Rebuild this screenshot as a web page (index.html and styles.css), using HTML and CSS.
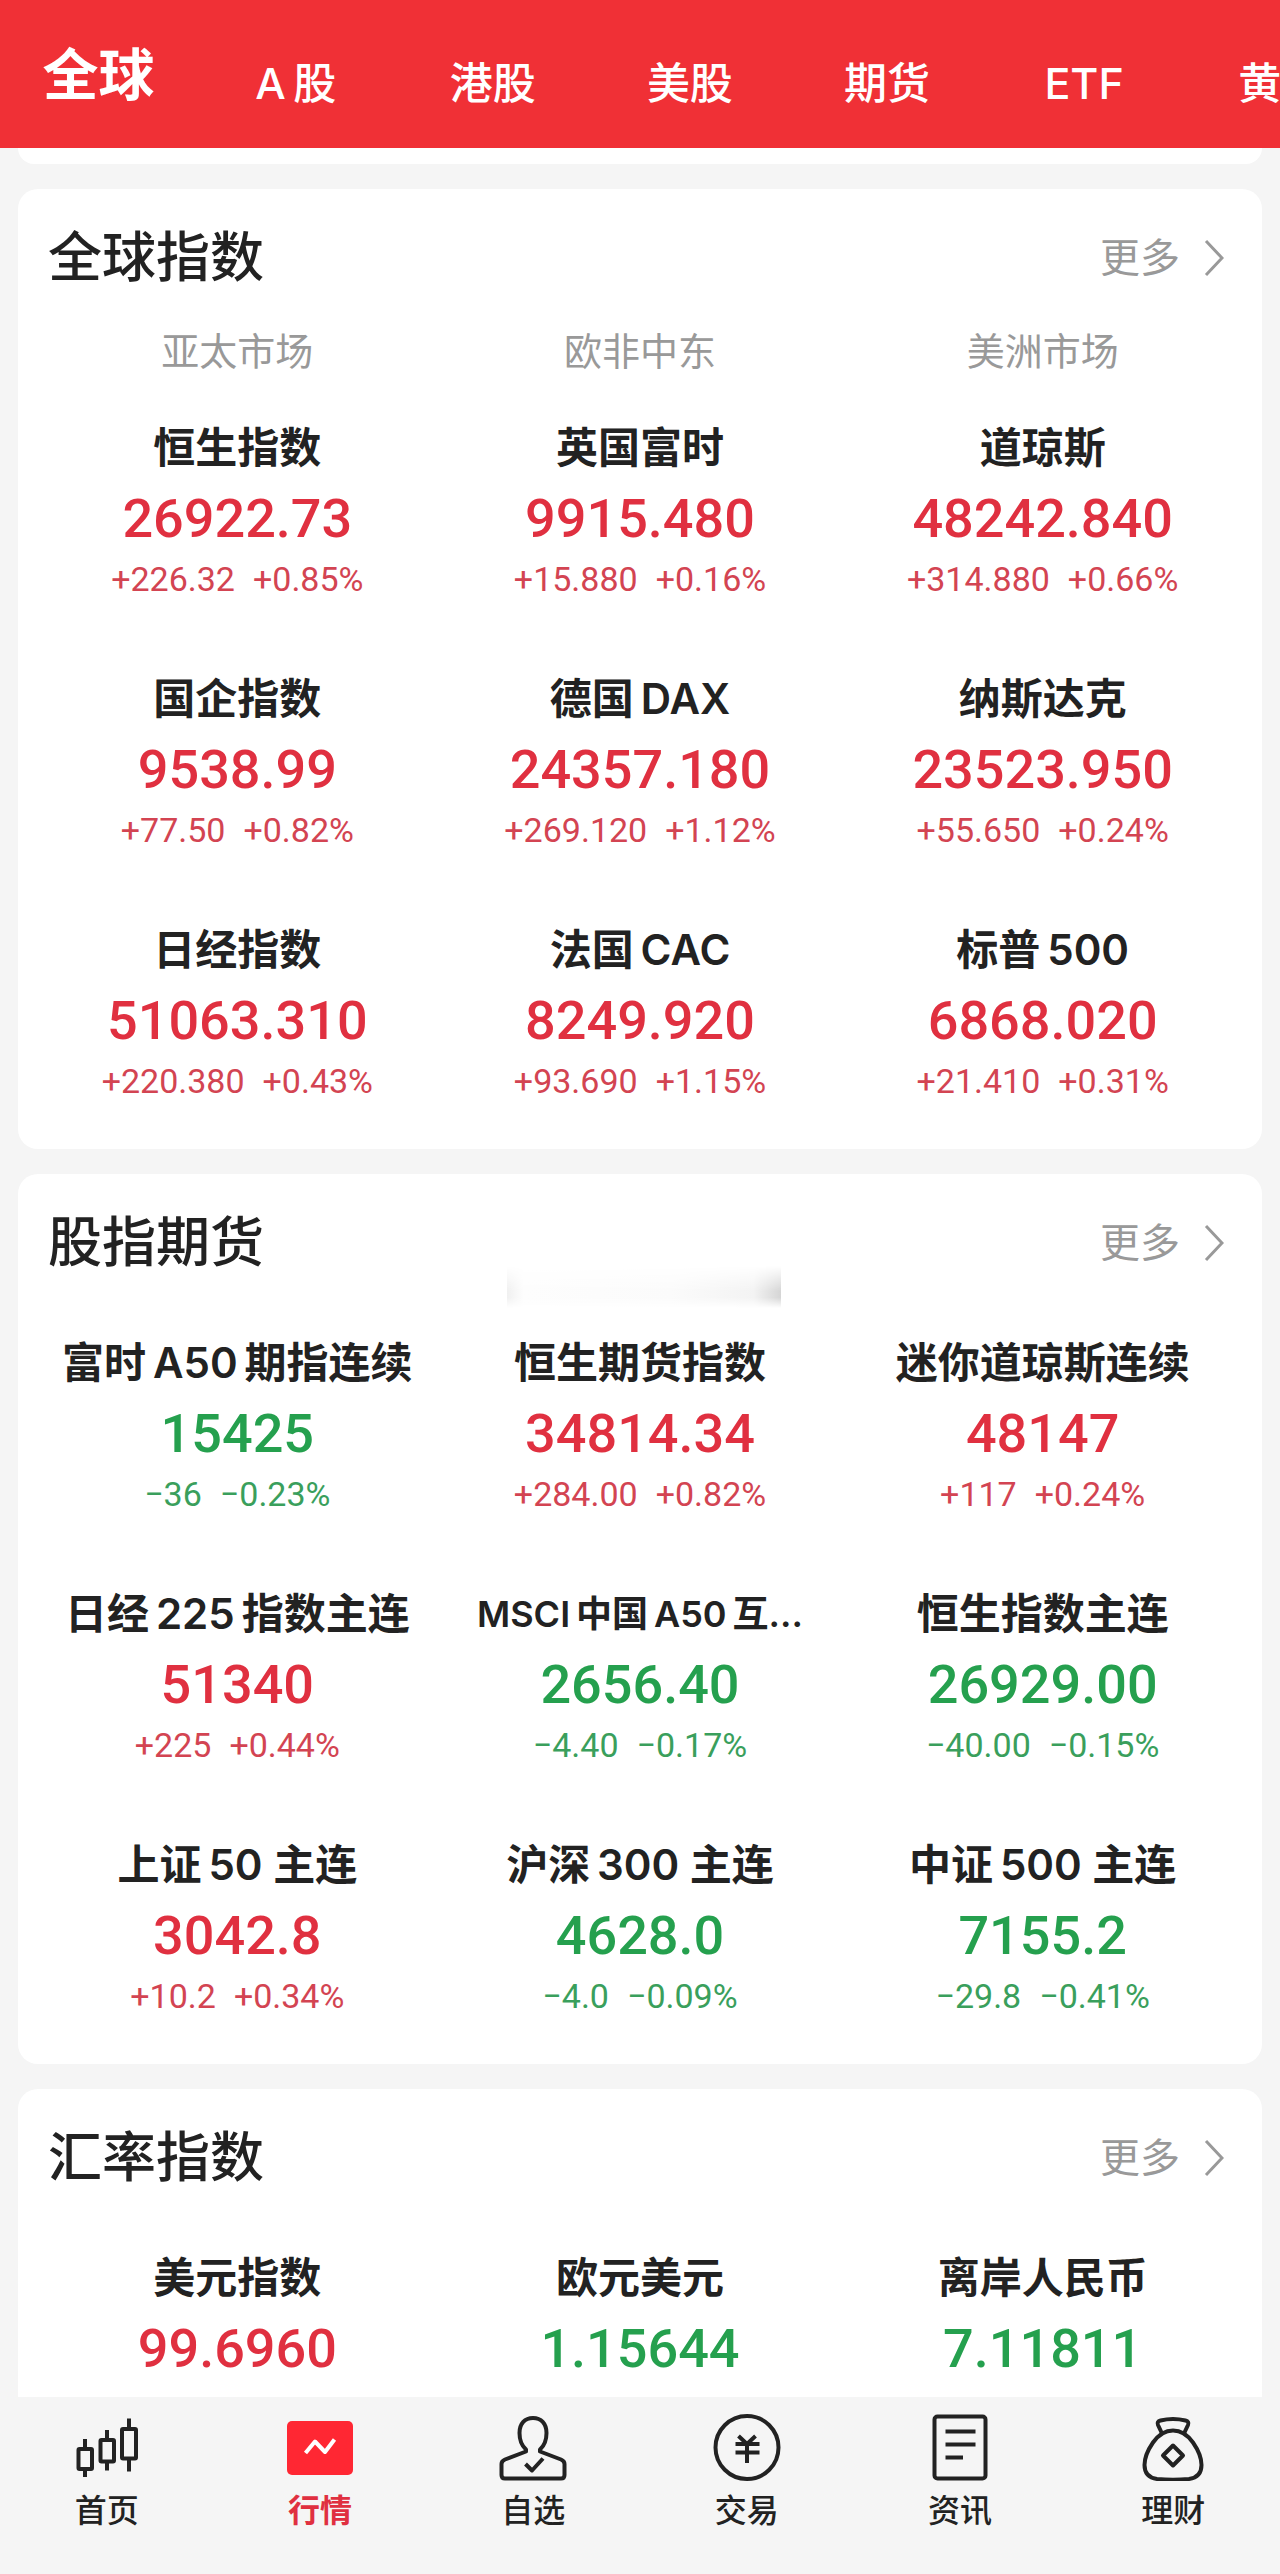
FILE: index.html
```html
<!doctype html>
<html lang="zh-CN">

<head>
    <title>行情 | 全球</title>
    <meta charset="utf-8" />
    <meta name="viewport" content="width=device-width, initial-scale=1.0" />
    <link rel="stylesheet" href="styles.css">
</head>

<body>
    <nav class="tabs">
        <a class="tab active" href="#global">全球</a>
        <a class="tab" href="#a">A&thinsp;股</a>
        <a class="tab" href="#hk">港股</a>
        <a class="tab" href="#us">美股</a>
        <a class="tab" href="#futures">期货</a>
        <a class="tab" href="#etf">ETF</a>
        <a class="tab" href="#gold">黄金</a>
    </nav>

    <main class="content">
        <div class="card card-tail"></div>

        <section class="card">
            <div class="card-header">
                <h2>全球指数</h2>
                <a class="more" href="#global-more">更多
                    <svg class="chevron" viewBox="0 0 20 38"><path d="M2 2 L18 19 L2 36" /></svg>
                </a>
            </div>
            <div class="markets">
                <span>亚太市场</span>
                <span>欧非中东</span>
                <span>美洲市场</span>
            </div>
            <div class="quotes">
                <div class="quote up">
                    <h3>恒生指数</h3>
                    <p class="price">26922.73</p>
                    <p class="change"><span>+226.32</span><span>+0.85%</span></p>
                </div>
                <div class="quote up">
                    <h3>英国富时</h3>
                    <p class="price">9915.480</p>
                    <p class="change"><span>+15.880</span><span>+0.16%</span></p>
                </div>
                <div class="quote up">
                    <h3>道琼斯</h3>
                    <p class="price">48242.840</p>
                    <p class="change"><span>+314.880</span><span>+0.66%</span></p>
                </div>
                <div class="quote up">
                    <h3>国企指数</h3>
                    <p class="price">9538.99</p>
                    <p class="change"><span>+77.50</span><span>+0.82%</span></p>
                </div>
                <div class="quote up">
                    <h3>德国&thinsp;DAX</h3>
                    <p class="price">24357.180</p>
                    <p class="change"><span>+269.120</span><span>+1.12%</span></p>
                </div>
                <div class="quote up">
                    <h3>纳斯达克</h3>
                    <p class="price">23523.950</p>
                    <p class="change"><span>+55.650</span><span>+0.24%</span></p>
                </div>
                <div class="quote up">
                    <h3>日经指数</h3>
                    <p class="price">51063.310</p>
                    <p class="change"><span>+220.380</span><span>+0.43%</span></p>
                </div>
                <div class="quote up">
                    <h3>法国&thinsp;CAC</h3>
                    <p class="price">8249.920</p>
                    <p class="change"><span>+93.690</span><span>+1.15%</span></p>
                </div>
                <div class="quote up">
                    <h3>标普&thinsp;500</h3>
                    <p class="price">6868.020</p>
                    <p class="change"><span>+21.410</span><span>+0.31%</span></p>
                </div>
            </div>
        </section>

        <section class="card">
            <div class="smudge"></div>
            <div class="card-header">
                <h2>股指期货</h2>
                <a class="more" href="#futures-more">更多
                    <svg class="chevron" viewBox="0 0 20 38"><path d="M2 2 L18 19 L2 36" /></svg>
                </a>
            </div>
            <div class="quotes">
                <div class="quote down">
                    <h3>富时&thinsp;A50&thinsp;期指连续</h3>
                    <p class="price">15425</p>
                    <p class="change"><span>−36</span><span>−0.23%</span></p>
                </div>
                <div class="quote up">
                    <h3>恒生期货指数</h3>
                    <p class="price">34814.34</p>
                    <p class="change"><span>+284.00</span><span>+0.82%</span></p>
                </div>
                <div class="quote up">
                    <h3>迷你道琼斯连续</h3>
                    <p class="price">48147</p>
                    <p class="change"><span>+117</span><span>+0.24%</span></p>
                </div>
                <div class="quote up">
                    <h3>日经&thinsp;225&thinsp;指数主连</h3>
                    <p class="price">51340</p>
                    <p class="change"><span>+225</span><span>+0.44%</span></p>
                </div>
                <div class="quote down">
                    <h3 class="long">MSCI&thinsp;中国&thinsp;A50&thinsp;互...</h3>
                    <p class="price">2656.40</p>
                    <p class="change"><span>−4.40</span><span>−0.17%</span></p>
                </div>
                <div class="quote down">
                    <h3>恒生指数主连</h3>
                    <p class="price">26929.00</p>
                    <p class="change"><span>−40.00</span><span>−0.15%</span></p>
                </div>
                <div class="quote up">
                    <h3>上证&thinsp;50 主连</h3>
                    <p class="price">3042.8</p>
                    <p class="change"><span>+10.2</span><span>+0.34%</span></p>
                </div>
                <div class="quote down">
                    <h3>沪深&thinsp;300 主连</h3>
                    <p class="price">4628.0</p>
                    <p class="change"><span>−4.0</span><span>−0.09%</span></p>
                </div>
                <div class="quote down">
                    <h3>中证&thinsp;500 主连</h3>
                    <p class="price">7155.2</p>
                    <p class="change"><span>−29.8</span><span>−0.41%</span></p>
                </div>
            </div>
        </section>

        <section class="card">
            <div class="card-header">
                <h2>汇率指数</h2>
                <a class="more" href="#fx-more">更多
                    <svg class="chevron" viewBox="0 0 20 38"><path d="M2 2 L18 19 L2 36" /></svg>
                </a>
            </div>
            <div class="quotes">
                <div class="quote up">
                    <h3>美元指数</h3>
                    <p class="price">99.6960</p>
                    <p class="change"><span>+0.0551</span><span>+0.05%</span></p>
                </div>
                <div class="quote down">
                    <h3>欧元美元</h3>
                    <p class="price">1.15644</p>
                    <p class="change"><span>−0.00177</span><span>−0.15%</span></p>
                </div>
                <div class="quote down">
                    <h3>离岸人民币</h3>
                    <p class="price">7.11811</p>
                    <p class="change"><span>−0.00193</span><span>−0.03%</span></p>
                </div>
            </div>
        </section>
    </main>

    <nav class="bottom-nav">
        <a class="nav-item" href="#home">
            <svg class="icon" viewBox="0 0 68 68">
                <rect x="5.5" y="36" width="13.5" height="20" rx="1" />
                <path d="M12 26V36M12 56V64" />
                <rect x="27.5" y="27" width="13.5" height="21.5" rx="1" />
                <path d="M34 17V27M34 48.5V57.5" />
                <rect x="49" y="16" width="14" height="29.5" rx="1" />
                <path d="M56 5.5V16M56 45.5V58.5" />
            </svg>
            首页
        </a>
        <a class="nav-item active" href="#quotes">
            <svg class="icon" viewBox="0 0 68 68">
                <rect class="fill" x="1" y="8" width="66" height="54" rx="5" />
                <path class="trend" d="M19.5 40L29 28.5L39 39L48.5 26.5" />
            </svg>
            行情
        </a>
        <a class="nav-item" href="#watchlist">
            <svg class="icon" viewBox="0 0 68 68">
                <path d="M27 36.5C22.5 32.5 20.5 27 20.5 20C20.5 10.5 26 5 34 5S47.5 10.5 47.5 20C47.5 27 45.5 32.5 41 36.5V38.5L62 46.500Q65.5 48 65.5 51V62Q65.5 65.5 62 65.5H6Q2.500 65.5 2.500 62V51Q2.500 48 6 46.500L27 38.5Z" />
                <path d="M26.5 51L33 57.5L44 45.5" />
            </svg>
            自选
        </a>
        <a class="nav-item" href="#trade">
            <svg class="icon" viewBox="0 0 68 68">
                <circle cx="34" cy="34.5" r="31.5" />
                <path d="M25.5 23L34 31L42.5 23M22.5 31H46.5M22.5 39.5H46.5M34 31V50" />
            </svg>
            交易
        </a>
        <a class="nav-item" href="#news">
            <svg class="icon" viewBox="0 0 68 68">
                <rect x="8.5" y="3.5" width="51" height="62" rx="3" />
                <path d="M19.5 18.5H49.5M19.5 31.5H49.5M19.5 44.5H37" />
            </svg>
            资讯
        </a>
        <a class="nav-item" href="#wealth">
            <svg class="icon" viewBox="0 0 68 68">
                <path d="M23 20.5L19 12Q17.5 8.5 21.5 7.5Q34 4.5 46.5 7.5Q50.5 8.5 49 12L45 20.5" />
                <path d="M34 17.5C42 17.5 49 22.5 54 29.5C59.5 37.5 62.5 46 62.5 52C62.5 61 57 65 50 66Q34 67.5 18 66C11 65 5.5 61 5.5 52C5.5 46 8.5 37.5 14 29.5C19 22.5 26 17.5 34 17.5Z" />
                <path d="M34 32.5L44 42.5L34 52.5L24 42.5Z" />
            </svg>
            理财
        </a>
    </nav>
</body>

</html>
```

FILE: styles.css
```css
* {
    box-sizing: border-box;
}

body {
    display: flex;
    flex-direction: column;
    height: 100vh;
    margin: 0;
    font-family: Inter, "Noto Sans CJK SC", sans-serif;
    color: #222;
    background-color: #f5f5f5;
}

h2,
h3,
p {
    margin: 0;
}

a {
    color: inherit;
    text-decoration: none;
}

/* top tabs */
.tabs {
    display: flex;
    flex: none;
    align-items: flex-start;
    height: 148px;
    overflow: hidden;
    color: #fff;
    background-color: #f03036;
}

.tab {
    flex: 0 0 15.4%;
    font-size: 43px;
    font-weight: 500;
    line-height: 166px;
    text-align: center;
    white-space: nowrap;
}

.tab.active {
    font-size: 56px;
    font-weight: 700;
    line-height: 150px;
}

/* cards */
.content {
    display: flex;
    flex: 1;
    flex-direction: column;
    gap: 25px;
    min-height: 0;
    padding: 0 18px;
    overflow: hidden;
}

.card {
    position: relative;
    flex: none;
    padding: 30px 18px 49px;
    border-radius: 20px;
    background-color: #fff;
}

.card-tail {
    height: 16px;
    padding: 0;
    border-radius: 0 0 20px 20px;
}

.card-header {
    display: flex;
    align-items: center;
    justify-content: space-between;
    padding: 0 20px 0 12px;
    line-height: 78px;
}

.card-header h2 {
    font-size: 54px;
    font-weight: 500;
}

.more {
    display: flex;
    align-items: center;
    gap: 24px;
    font-size: 40px;
    color: #999;
}

.chevron {
    width: 20px;
    height: 38px;
    fill: none;
    stroke: #999;
    stroke-width: 3;
}

.markets,
.quotes {
    display: grid;
    grid-template-columns: repeat(3, 1fr);
    text-align: center;
}

.markets {
    margin: 28px 0 -10px;
    font-size: 38px;
    line-height: 52px;
    color: #999;
}

.quotes {
    row-gap: 71px;
    margin-top: 51px;
}

.quote {
    white-space: nowrap;
}

.quote h3 {
    font-size: 42px;
    font-weight: 600;
    line-height: 60px;
}

.quote .long {
    font-size: 36px;
}

.price {
    font-family: Roboto, sans-serif;
    font-size: 54px;
    font-weight: 500;
    line-height: 82px;
}

.change {
    display: flex;
    justify-content: center;
    gap: 18px;
    font-family: Roboto, sans-serif;
    font-size: 34px;
    line-height: 38px;
}

.up .price {
    color: #e03040;
}

.up .change {
    color: #d34452;
}

.down .price {
    color: #25a04e;
}

.down .change {
    color: #3a9f5c;
}

.smudge {
    position: absolute;
    top: 92px;
    left: 39.3%;
    width: 22%;
    height: 42px;
    background: linear-gradient(to right, #f0f0f0, #fdfdfd 6%, #fbfbfb 60%, #f3f3f3 90%, #d5d5d5);
    -webkit-mask-image: linear-gradient(transparent, #000 60%, #000 75%, transparent);
    mask-image: linear-gradient(transparent, #000 60%, #000 75%, transparent);
}

/* bottom navigation */
.bottom-nav {
    display: flex;
    flex: none;
    height: 177px;
    padding-top: 16px;
    background-color: #f5f5f5;
}

.nav-item {
    display: flex;
    flex: 1;
    flex-direction: column;
    align-items: center;
    gap: 10px;
    font-size: 32px;
    font-weight: 500;
    line-height: 40px;
}

.nav-item.active {
    font-weight: 700;
    color: #e03040;
}

.icon {
    width: 68px;
    height: 68px;
    fill: none;
    stroke: #222;
    stroke-width: 4;
    stroke-linejoin: round;
}

.icon .fill {
    fill: #ff2733;
    stroke: none;
}

.icon .trend {
    stroke: #fff;
}
```
